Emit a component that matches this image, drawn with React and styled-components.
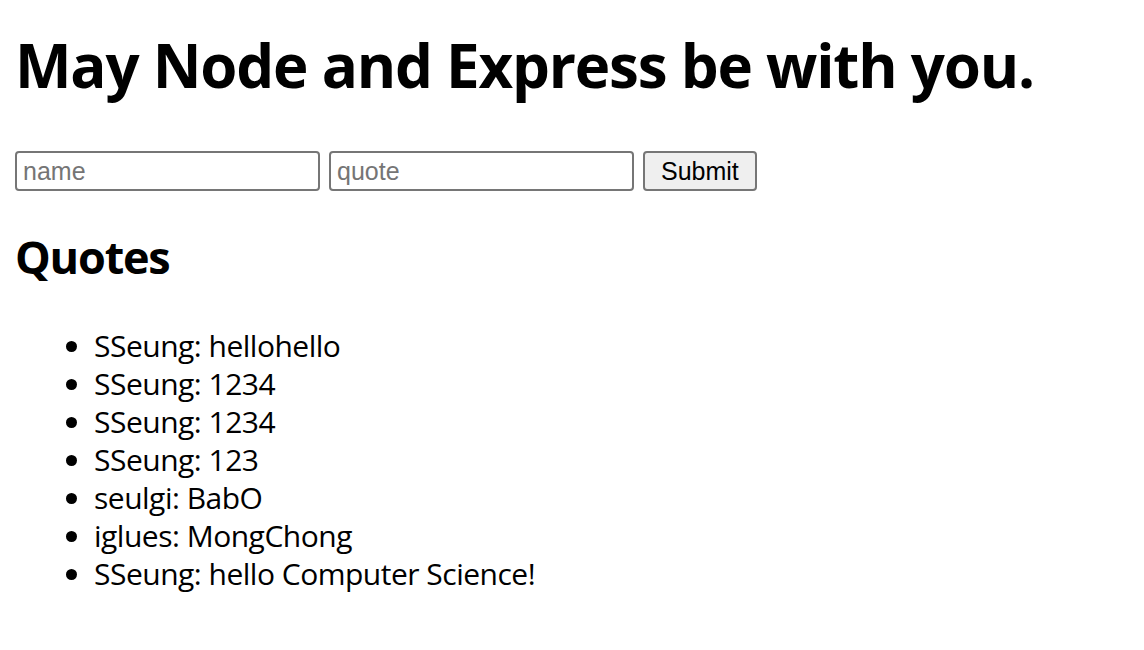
import React from "react";
import styled, { createGlobalStyle } from "styled-components";

const Global = createGlobalStyle`
  body {
    margin: 15px;
    font-family: "Open Sans", "Noto Sans CJK KR", sans-serif;
    font-size: 30px;
    color: #000;
    background: #fff;
  }
`;

const Title = styled.h1`
  font-size: 60px;
  font-weight: 700;
  line-height: 80px;
  margin: 10px 0 46px;
  letter-spacing: -1.2px;
`;

const Form = styled.form`
  display: flex;
  gap: 9px;
  align-items: center;
`;

const Input = styled.input`
  box-sizing: border-box;
  width: 305px;
  height: 40px;
  padding: 2px 6px;
  border: 2px solid #767676;
  border-radius: 4px;
  font-family: "Liberation Sans", Arial, sans-serif;
  font-size: 25px;
  color: #000;
  &::placeholder {
    color: #757575;
  }
`;

const Button = styled.button`
  box-sizing: border-box;
  height: 40px;
  padding: 0 16px;
  border: 2px solid #767676;
  border-radius: 4px;
  background: #efefef;
  font-family: "Liberation Sans", Arial, sans-serif;
  font-size: 25px;
  color: #000;
`;

const Subtitle = styled.h2`
  font-size: 45px;
  font-weight: 700;
  line-height: 60px;
  margin: 36px 0 40px;
  letter-spacing: -1.2px;
`;

const List = styled.ul`
  margin: 0;
  padding-left: 79px;
`;

const Item = styled.li`
  line-height: 38px;
  letter-spacing: -0.5px;
`;

const quotes = [
  ["SSeung", "hellohello"],
  ["SSeung", "1234"],
  ["SSeung", "1234"],
  ["SSeung", "123"],
  ["seulgi", "BabO"],
  ["iglues", "MongChong"],
  ["SSeung", "hello Computer Science!"],
];

export default function App() {
  return (
    <>
      <Global />
      <Title>May Node and Express be with you.</Title>
      <Form onSubmit={(e) => e.preventDefault()}>
        <Input type="text" placeholder="name" name="name" />
        <Input type="text" placeholder="quote" name="quote" />
        <Button type="submit">Submit</Button>
      </Form>
      <Subtitle>Quotes</Subtitle>
      <List>
        {quotes.map(([n, q], i) => (
          <Item key={i}>
            {n}: {q}
          </Item>
        ))}
      </List>
    </>
  );
}
